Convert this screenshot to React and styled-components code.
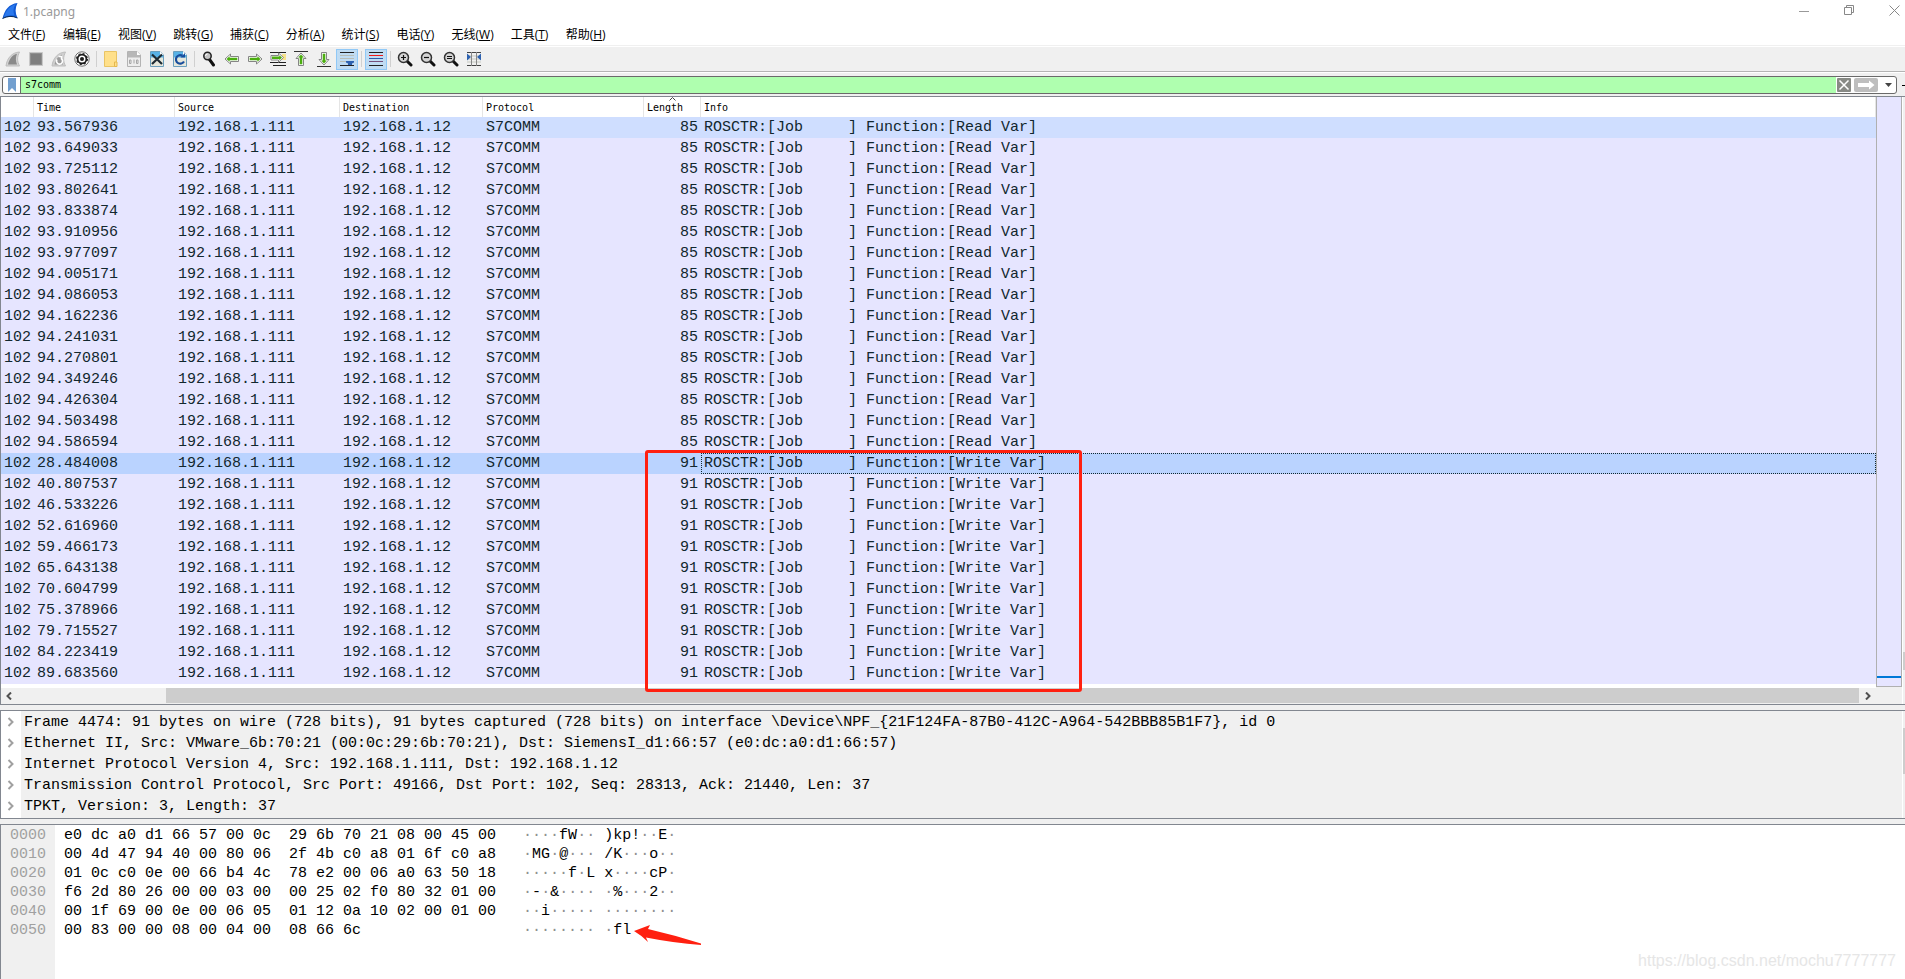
import React from "react";
import styled, { createGlobalStyle, css } from "styled-components";

const MONO = '"Liberation Mono", monospace';
const UI = '"Open Sans", "Noto Sans CJK SC", sans-serif';
const SMALL = '"DejaVu Sans Mono", "Noto Sans CJK SC", monospace';
const EDGE = "#828790";

const Global = createGlobalStyle`
  *, *::before, *::after { box-sizing: border-box; }
  body { margin: 0; background: #fff; color: #000; font: 12px/16px ${UI}; }
  button, input { font: inherit; color: inherit; margin: 0; padding: 0; border: 0; background: none; }
  button { cursor: pointer; }
`;

const Window = styled.main`
  display: flex;
  flex-direction: column;
  min-height: 100vh;
  background: #f0f0f0;
`;

const TitleBar = styled.header`
  display: flex;
  align-items: center;
  height: 24px;
  padding: 0 0 3px 2px;
  background: #fff;
`;

const Title = styled.h1`
  flex: 1;
  margin: 0 0 0 4px;
  padding-top: 3px;
  font: 12px/16px "Noto Sans", sans-serif;
  color: #999;
`;

const WindowButton = styled.button`
  display: flex;
  justify-content: center;
  width: 45px;
  svg { display: block; }
  &:last-child { width: 21px; margin-left: 12px; }
`;

const MenuBar = styled.nav`
  display: flex;
  height: 22px;
  padding-left: 8px;
  gap: 17px;
  background: #fff;
  border-bottom: 1px solid #f0f0f0;
`;

const MenuItem = styled.button`
  height: 21px;
  min-width: 38px;
  text-align: left;
  white-space: nowrap;
  line-height: 22px;
`;

const ToolBar = styled.div`
  display: flex;
  align-items: center;
  gap: 1px;
  height: 26px;
  padding-left: 2px;
  border-top: 1px solid #fff;
  border-bottom: 1px solid #b4b4b4;
`;

const ToolButton = styled.button`
  display: flex;
  align-items: center;
  justify-content: center;
  width: 22px;
  height: 21px;
  border: 1px solid transparent;
  svg { display: block; flex: none; }
  ${(p) => p.$on && css`
    border-color: #90c8f6;
    background: #c0dcf3;
  `}
`;

const Separator = styled.span`
  width: 1px;
  height: 16px;
  margin: 0 2px;
  background: #d0d0d0;
`;

const FilterBar = styled.form`
  display: flex;
  align-items: center;
  gap: 5px;
  height: 24px;
  padding: 1px 0 0 2px;
  border-top: 1px solid #fff;
`;

const FilterBox = styled.div`
  display: flex;
  flex: 1;
  align-items: center;
  height: 18px;
  border: 1px solid #6a6a6a;
  border-radius: 3px;
  background: #fff;
  overflow: hidden;
`;

const IconButton = styled.button`
  display: flex;
  align-items: center;
  justify-content: center;
  width: ${(p) => p.$w}px;
  height: 16px;
  svg { display: block; }
`;

const FilterInput = styled.input`
  flex: 1;
  min-width: 0;
  height: 16px;
  && { padding: 0 4px; }
  border-left: 1px solid #6a6a6a !important;
  && { background: #afffaf; font: 10px/16px ${SMALL}; }
  outline: 0;
`;

const AddButton = styled.button`
  width: 3px;
  height: 1px;
  && { background: #000; }
`;

const ListPane = styled.section`
  position: relative;
  display: flex;
  border: 1px solid ${EDGE};
  border-right: 0;
`;

const ListMain = styled.div`
  display: flex;
  flex: 1;
  flex-direction: column;
  min-width: 0;
  background: #fff;
`;

const Packets = styled.table`
  width: 100%;
  border-collapse: separate;
  border-spacing: 0;
  table-layout: fixed;
`;

const HeadCell = styled.th`
  position: relative;
  height: 20px;
  padding: 2px 3px 0;
  border-right: 1px solid #e5e5e5;
  font: 10px/16px ${SMALL};
  text-align: left;
`;

const SortMark = styled.svg`
  position: absolute;
  top: 0;
  left: 50%;
  margin-left: -3px;
`;

const Row = styled.tr`
  background: ${(p) => (p.$tone === "selected" ? "#bad3ff" : p.$tone === "hover" ? "#cfdeff" : "#e6e5ff")};
  td:last-child {
    ${(p) => p.$tone === "selected" && css`
      outline: 1px dotted #12272e;
      outline-offset: -1px;
    `}
  }
`;

const Cell = styled.td`
  height: 21px;
  padding: 0 3px;
  overflow: hidden;
  color: #12272e;
  font: 15px/21px ${MONO};
  text-align: ${(p) => (p.$right ? "right" : "left")};
  white-space: pre;
`;

const HScroll = styled.div`
  display: flex;
  height: 16px;
  margin-top: 4px;
  padding-bottom: 1px;
  background: #f0f0f0;
`;

const HTrack = styled.div`
  flex: 1;
  padding-left: 149px;
  &::before { content: ""; display: block; height: 15px; background: #cdcdcd; }
`;

const SideColumn = styled.aside`
  display: flex;
  align-items: flex-start;
  width: 29px;
`;

const MiniMap = styled.div`
  display: flex;
  flex-direction: column;
  justify-content: flex-end;
  align-self: stretch;
  width: 26px;
  margin-bottom: 17px;
  padding-bottom: 8px;
  border: 1px solid #b0b0b0;
  border-top: 0;
  background: #e6e5ff;
  &::after { content: ""; height: 2px; background: #0078d7; }
`;

const VScroll = styled.div`
  align-self: stretch;
  width: 3px;
  border-left: 1px solid #fff;
  padding-top: ${(p) => p.$top}px;
  &::after { content: ""; display: block; height: ${(p) => p.$size}px; background: #cdcdcd; }
`;

const Highlight = styled.div`
  position: absolute;
  top: 353px;
  left: 644px;
  width: 437px;
  height: 242px;
  border: 3px solid #ff2010;
  border-radius: 3px;
  pointer-events: none;
`;

const DetailPane = styled.section`
  display: flex;
  margin-top: 5px;
  border: 1px solid ${EDGE};
  border-right: 0;
`;

const DetailTree = styled.ul`
  flex: 1;
  margin: 0;
  padding: 1px 0;
  list-style: none;
  background: linear-gradient(to right, #fff 20px, #f0f0f0 20px);
`;

const DetailItem = styled.li`
  display: flex;
  align-items: center;
  height: 21px;
  font: 15px/21px ${MONO};
  white-space: pre;
`;

const Expander = styled.button`
  display: flex;
  align-items: center;
  width: 23px;
  height: 21px;
  && { padding: 0 0 1px 6px; }
`;

const BytesPane = styled.section`
  display: flex;
  flex: 1;
  margin-top: 5px;
  border: solid ${EDGE};
  border-width: 1px 0 0 1px;
  background: #fff;
`;

const BytesColumn = styled.pre`
  margin: 0;
  padding: 1px ${(p) => p.$pad}px 0;
  font: 15px/19px ${MONO};
  ${(p) => p.$offset && css`
    background: #f0f0f0;
    color: #a0a0a0;
  `}
`;

const Dot = styled.span`
  color: #909090;
`;

const Pointer = styled.svg`
  display: block;
  align-self: flex-start;
  margin: 100px 0 0 -60px;
`;

const Watermark = styled.a`
  align-self: flex-end;
  margin: 0 9px 6px auto;
  color: #e6e6e6;
  font: 16px/24px "Liberation Sans", sans-serif;
  text-decoration: none;
`;

/* ---------- icons ---------- */

const Ico = ({ children, w = 16, h = 16 }) => (
  <svg width={w} height={h} viewBox={`0 0 ${w} ${h}`} fill="none" aria-hidden="true">{children}</svg>
);

const AppFin = () => (
  <Ico w={17} h={17}>
    <path d="M.5 16.5C2.500 8 7 2 15.500 1C13 6 13 11 15.500 16Q8 13.500 .5 16.500Z" fill="#1059d4" />
    <path d="M2 15C4 8 8 4 13.500 2.200C11 6 11 10 12.500 13.500Q7 12.500 2 15Z" fill="#2a78ec" />
    <path d="M.5 16.500Q8 12.500 15.500 16" stroke="#0b2b55" />
  </Ico>
);

const Fin = () => (
  <Ico>
    <path d="M1 15C2 7 7 1.500 14.500 1C12 6 12 10 14.500 15Z" fill="#d2d2d2" stroke="#bdbdbd" />
    <path d="M3 13.500C4.500 7.500 7.500 4 12 2.800C10.500 6.500 10.500 10 12 13.500Z" fill="#8a8a8a" />
  </Ico>
);

const Stop = () => (
  <Ico>
    <path d="M1.500 1.500h13v13h-13z" fill="#909090" stroke="#c8c8c8" />
    <path d="M3 3h10v10H3z" fill="#7f7f7f" />
  </Ico>
);

const Restart = () => (
  <Ico>
    <path d="M1 15C2 7 7 1.500 14.500 1C12 6 12 10 14.500 15Z" fill="#cfcfcf" stroke="#bdbdbd" />
    <path d="M3.500 13.500C5 8 7.500 5 11 3.500V7L12 13.500Z" fill="#9a9a9a" />
    <path d="M6 8.500a3 3 0 1 0 4 -1M7.500 5.500h3v3" stroke="#fff" strokeWidth="1.600" />
  </Ico>
);

const Gear = () => (
  <Ico>
    <circle cx="8" cy="8" r="7.200" fill="#fff" stroke="#6e6e6e" />
    <circle cx="8" cy="8" r="4.400" stroke="#1b1b1b" strokeWidth="1.800" />
    <circle cx="8" cy="8" r="5.400" stroke="#1b1b1b" strokeWidth="1.200" strokeDasharray="2.120 2.120" />
    <circle cx="8" cy="8" r="2" fill="#1b1b1b" />
  </Ico>
);

const Folder = () => (
  <Ico>
    <path d="M1.500 .5h12v15h-12z" fill="#ffe08a" stroke="#e9c464" />
    <path d="M11.500 11v4.500h2.500V11z" fill="#ffe08a" stroke="#e5b84d" />
  </Ico>
);

const Page = ({ top, body, line, children }) => (
  <Ico>
    <path d="M1.500 .5h9.500l3.500 3.500v11.500h-13z" fill={body} stroke={line} />
    <path d="M2 1h9l3 3v2.500H2z" fill={top} />
    <path d="M11 .5v3.500h3.500z" fill="#fff" />
    {children}
  </Ico>
);

const Save = () => (
  <Page top="#b7b7b7" body="#ededed" line="#b3b3b3">
    <path d="M3.500 9v3.500h1.500V9zM8 8.500v4M10.500 9v3.500H12V9z" stroke="#a6a6a6" />
  </Page>
);
const CloseFile = () => (
  <Page top="#58b2e6" body="#e5e7dc" line="#6b9fbd">
    <path d="M3 3.500l10 9.500M13 3.500L3 13" stroke="#1d2a33" strokeWidth="2.200" />
  </Page>
);
const Reload = () => (
  <Page top="#58b2e6" body="#e5e7dc" line="#6b9fbd">
    <path d="M12 10.500A4.300 4.300 0 1 1 10.500 4.700" stroke="#184d9c" strokeWidth="2.200" />
    <path d="M8.500 6.500h4.500V2z" fill="#184d9c" />
  </Page>
);

const Lens = ({ sign }) => (
  <Ico>
    <path d="M9.500 9.500l4.500 4.500" stroke="#111" strokeWidth="3" strokeLinecap="round" />
    <circle cx="6.500" cy="6.500" r="5" fill="#d5d5d5" stroke="#333" strokeWidth="1.500" />
    <path d={sign} stroke="#111" strokeWidth="1.200" />
  </Ico>
);
const Find = () => (
  <Ico>
    <path d="M8.500 8.500l4 5.500" stroke="#111" strokeWidth="3" strokeLinecap="round" />
    <circle cx="6.500" cy="5" r="3.700" fill="#c4c4c4" stroke="#222" strokeWidth="1.500" />
    <path d="M4.500 5a2 2 0 0 1 2-2" stroke="#fff" />
  </Ico>
);

const Arrow = ({ turn }) => (
  <Ico>
    <g transform={turn}>
      <path d="M1 8L6.500 3V5.500H14.500V10.500H6.500V13Z" fill="#fff" stroke="#858585" />
      <path d="M2.500 8L5.600 5.200V6.700H13.300V9.300H5.600V10.800Z" fill="#4cae10" />
    </g>
  </Ico>
);
const GoTo = () => (
  <Ico>
    <path d="M0 1.500h16M0 11.500h16M3 14.500h13" stroke="#222" />
    <path d="M12 3h4v6h-4z" fill="#f6e28a" />
    <path d="M13.500 6.500L8.500 2V4.500H1v4.500h7.500V11.300Z" fill="#fff" stroke="#858585" />
    <path d="M12 6.600L9.300 4.200V5.500H2v2.400h7.300V9.200Z" fill="#4cae10" />
  </Ico>
);
const Vertical = ({ down }) => (
  <Ico>
    <g transform={down ? "rotate(180 8 8)" : undefined}>
      <path d="M1 .5h14" stroke="#333" />
      <path d="M8 2L13 7.500H10.500V14.500H5.500V7.500H3Z" fill="#fff" stroke="#858585" />
      <path d="M8 3.500L10.800 6.600H9.300V13.300H6.700V6.600H5.200Z" fill="#4cae10" />
    </g>
  </Ico>
);
const AutoScroll = () => (
  <Ico>
    <path d="M1 1.500h14M1 14.500h14" stroke="#222" />
    <path d="M1 4.500h14M1 7.500h14M1 10.500h6" stroke="#b9bdb5" />
    <path d="M7 10h8v1.500l-2 1v1.500h-4v-1.500l-2-1z" fill="#2e62b0" />
  </Ico>
);
const Colorize = () => (
  <Ico>
    <path d="M1 1.500h14M1 14.500h14" stroke="#222" />
    <path d="M1 4.500h14" stroke="#f01818" />
    <path d="M1 7.500h14" stroke="#2d5aa8" />
    <path d="M1 10.500h14" stroke="#75507b" />
  </Ico>
);
const Resize = () => (
  <Ico>
    <path d="M1 1.500h14M1 14.500h14" stroke="#444" />
    <path d="M1 5h14M1 8h14M1 11h14" stroke="#c5c8c0" />
    <path d="M5.500 1v14M10.500 1v14" stroke="#888" />
    <path d="M1 2.500l4 3.500-4 3.500zM15 2.500l-4 3.500 4 3.500z" fill="#2e62b0" />
  </Ico>
);

/* ---------- data ---------- */

const menus = [
  ["文件", "F"], ["编辑", "E"], ["视图", "V"], ["跳转", "G"], ["捕获", "C"], ["分析", "A"],
  ["统计", "S"], ["电话", "Y"], ["无线", "W"], ["工具", "T"], ["帮助", "H"],
];

const tools = [
  ["Start capture", <Fin />], ["Stop capture", <Stop />], ["Restart capture", <Restart />], ["Capture options", <Gear />], null,
  ["Open", <Folder />], ["Save", <Save />], ["Close file", <CloseFile />], ["Reload", <Reload />], null,
  ["Find packet", <Find />], ["Previous", <Arrow />], ["Next", <Arrow turn="rotate(180 8 8)" />], ["Go to packet", <GoTo />],
  ["First packet", <Vertical />], ["Last packet", <Vertical down />], ["Auto scroll", <AutoScroll />, true], null,
  ["Colorize", <Colorize />, true], null,
  ["Zoom in", <Lens sign="M4 6.500h5M6.500 4v5" />], ["Zoom out", <Lens sign="M4 6.500h5" />],
  ["Normal size", <Lens sign="M4 5.500h5M4 7.500h5" />], ["Resize columns", <Resize />],
];

const columns = [["", 33], ["Time", 141], ["Source", 165], ["Destination", 143], ["Protocol", 161], ["Length", 57], ["Info"]];

const readTimes = [
  "93.567936", "93.649033", "93.725112", "93.802641", "93.833874", "93.910956", "93.977097", "94.005171",
  "94.086053", "94.162236", "94.241031", "94.270801", "94.349246", "94.426304", "94.503498", "94.586594",
];
const writeTimes = [
  "28.484008", "40.807537", "46.533226", "52.616960", "59.466173", "65.643138", "70.604799", "75.378966",
  "79.715527", "84.223419", "89.683560",
];
const packets = [
  ...readTimes.map((time) => ({ time, length: 85, verb: "Read" })),
  ...writeTimes.map((time) => ({ time, length: 91, verb: "Write" })),
];
const tones = { "93.567936": "hover", "28.484008": "selected" };

const details = [
  "Frame 4474: 91 bytes on wire (728 bits), 91 bytes captured (728 bits) on interface \\Device\\NPF_{21F124FA-87B0-412C-A964-542BBB85B1F7}, id 0",
  "Ethernet II, Src: VMware_6b:70:21 (00:0c:29:6b:70:21), Dst: SiemensI_d1:66:57 (e0:dc:a0:d1:66:57)",
  "Internet Protocol Version 4, Src: 192.168.1.111, Dst: 192.168.1.12",
  "Transmission Control Protocol, Src Port: 49166, Dst Port: 102, Seq: 28313, Ack: 21440, Len: 37",
  "TPKT, Version: 3, Length: 37",
];

const bytes = [
  ["0000", "e0 dc a0 d1 66 57 00 0c  29 6b 70 21 08 00 45 00", "····fW·· )kp!··E·"],
  ["0010", "00 4d 47 94 40 00 80 06  2f 4b c0 a8 01 6f c0 a8", "·MG·@··· /K···o··"],
  ["0020", "01 0c c0 0e 00 66 b4 4c  78 e2 00 06 a0 63 50 18", "·····f·L x····cP·"],
  ["0030", "f6 2d 80 26 00 00 03 00  00 25 02 f0 80 32 01 00", "·-·&···· ·%···2··"],
  ["0040", "00 1f 69 00 0e 00 06 05  01 12 0a 10 02 00 01 00", "··i····· ········"],
  ["0050", "00 83 00 00 08 00 04 00  08 66 6c", "········ ·fl"],
];

const dimDots = (text) =>
  text.split(/(·+)/).map((part, i) => (part.startsWith("·") ? <Dot key={i}>{part}</Dot> : part));

export default function App() {
  return (
    <>
      <Global />
      <Window>
        <TitleBar>
          <AppFin />
          <Title>1.pcapng</Title>
          <WindowButton aria-label="Minimize"><Ico w={11} h={11}><path d="M0 6.500h10" stroke="#999" /></Ico></WindowButton>
          <WindowButton aria-label="Restore">
            <Ico w={11} h={11}><path d="M.5 2.500h7v7h-7zM2.500 2.500v-2h7v7h-2" stroke="#888" /></Ico>
          </WindowButton>
          <WindowButton aria-label="Close"><Ico w={11} h={11}><path d="M.5 .5l10 10M10.500 .5l-10 10" stroke="#888" /></Ico></WindowButton>
        </TitleBar>

        <MenuBar>
          {menus.map(([name, key]) => (
            <MenuItem key={key}>{name}(<u>{key}</u>)</MenuItem>
          ))}
        </MenuBar>

        <ToolBar role="toolbar">
          {tools.map((tool, i) =>
            tool ? <ToolButton key={i} aria-label={tool[0]} $on={tool[2]}>{tool[1]}</ToolButton> : <Separator key={i} />
          )}
        </ToolBar>

        <FilterBar onSubmit={(e) => e.preventDefault()}>
          <FilterBox>
            <IconButton type="button" $w={17} aria-label="Filter bookmarks">
              <Ico w={8} h={14}><path d="M0 0h8v14l-4-4-4 4z" fill="#729fcf" /></Ico>
            </IconButton>
            <FilterInput aria-label="Display filter" defaultValue="s7comm" />
            <IconButton type="button" $w={16} aria-label="Clear filter">
              <Ico w={14} h={14}><rect width="14" height="14" rx="1" fill="#888a85" /><path d="M2.500 2.500l9 9M11.500 2.500l-9 9" stroke="#fff" strokeWidth="1.500" /></Ico>
            </IconButton>
            <IconButton $w={28} aria-label="Apply filter">
              <Ico w={24} h={14}><rect width="24" height="14" rx="2" fill="#bebebe" /><path d="M4 5h11V2.500L20.500 7 15 11.500V9H4z" fill="#fff" /></Ico>
            </IconButton>
            <IconButton type="button" $w={16} aria-label="Recent filters">
              <Ico w={7} h={4}><path d="M0 0h7L3.500 4z" fill="#444" /></Ico>
            </IconButton>
          </FilterBox>
          <AddButton type="button" aria-label="Add filter button" />
        </FilterBar>

        <ListPane>
          <ListMain>
            <Packets>
              <colgroup>
                {columns.map(([name, width]) => <col key={name} width={width} />)}
              </colgroup>
              <thead>
                <tr>
                  {columns.map(([name]) => (
                    <HeadCell key={name}>
                      {name}
                      {name === "Length" && (
                        <SortMark width="7" height="4" fill="none"><path d="M.5 3.500l3-3 3 3" stroke="#444" /></SortMark>
                      )}
                    </HeadCell>
                  ))}
                </tr>
              </thead>
              <tbody>
                {packets.map(({ time, length, verb }) => (
                  <Row key={time} $tone={tones[time]}>
                    <Cell>102</Cell>
                    <Cell>{time}</Cell>
                    <Cell>192.168.1.111</Cell>
                    <Cell>192.168.1.12</Cell>
                    <Cell>S7COMM</Cell>
                    <Cell $right>{length}</Cell>
                    <Cell>{`ROSCTR:[Job     ] Function:[${verb} Var]`}</Cell>
                  </Row>
                ))}
              </tbody>
            </Packets>
            <HScroll>
              <IconButton $w={16} aria-label="Scroll left"><Ico w={6} h={8}><path d="M5 .5L1.500 4 5 7.500" stroke="#505050" strokeWidth="2" /></Ico></IconButton>
              <HTrack />
              <IconButton $w={17} aria-label="Scroll right"><Ico w={6} h={8}><path d="M1 .5L4.500 4 1 7.500" stroke="#505050" strokeWidth="2" /></Ico></IconButton>
            </HScroll>
          </ListMain>
          <SideColumn>
            <MiniMap />
            <VScroll $top={555} $size={18} />
          </SideColumn>
          <Highlight />
        </ListPane>

        <DetailPane>
          <DetailTree>
            {details.map((text) => (
              <DetailItem key={text}>
                <Expander aria-label="Expand"><Ico w={7} h={10}><path d="M1.500 1L5.500 5l-4 4" stroke="#a0a0a0" strokeWidth="2" /></Ico></Expander>
                {text}
              </DetailItem>
            ))}
          </DetailTree>
          <VScroll $top={17} $size={46} />
        </DetailPane>

        <BytesPane>
          <BytesColumn $pad={9} $offset>{bytes.map((b) => b[0]).join("\n")}</BytesColumn>
          <BytesColumn $pad={9}>{bytes.map((b) => b[1]).join("\n")}</BytesColumn>
          <BytesColumn $pad={18}>
            {bytes.map((b) => <React.Fragment key={b[0]}>{dimDots(b[2])}{"\n"}</React.Fragment>)}
          </BytesColumn>
          <Pointer width="68" height="21" viewBox="0 0 68 21" aria-hidden="true">
            <path d="M0 6L16 0L14 4Q40 10 67 18.500V20Q40 18 12 12.500L14 17Q7 10 0 6Z" fill="#ff2010" />
          </Pointer>
          <Watermark href="https://blog.csdn.net/mochu7777777">https://blog.csdn.net/mochu7777777</Watermark>
        </BytesPane>
      </Window>
    </>
  );
}
